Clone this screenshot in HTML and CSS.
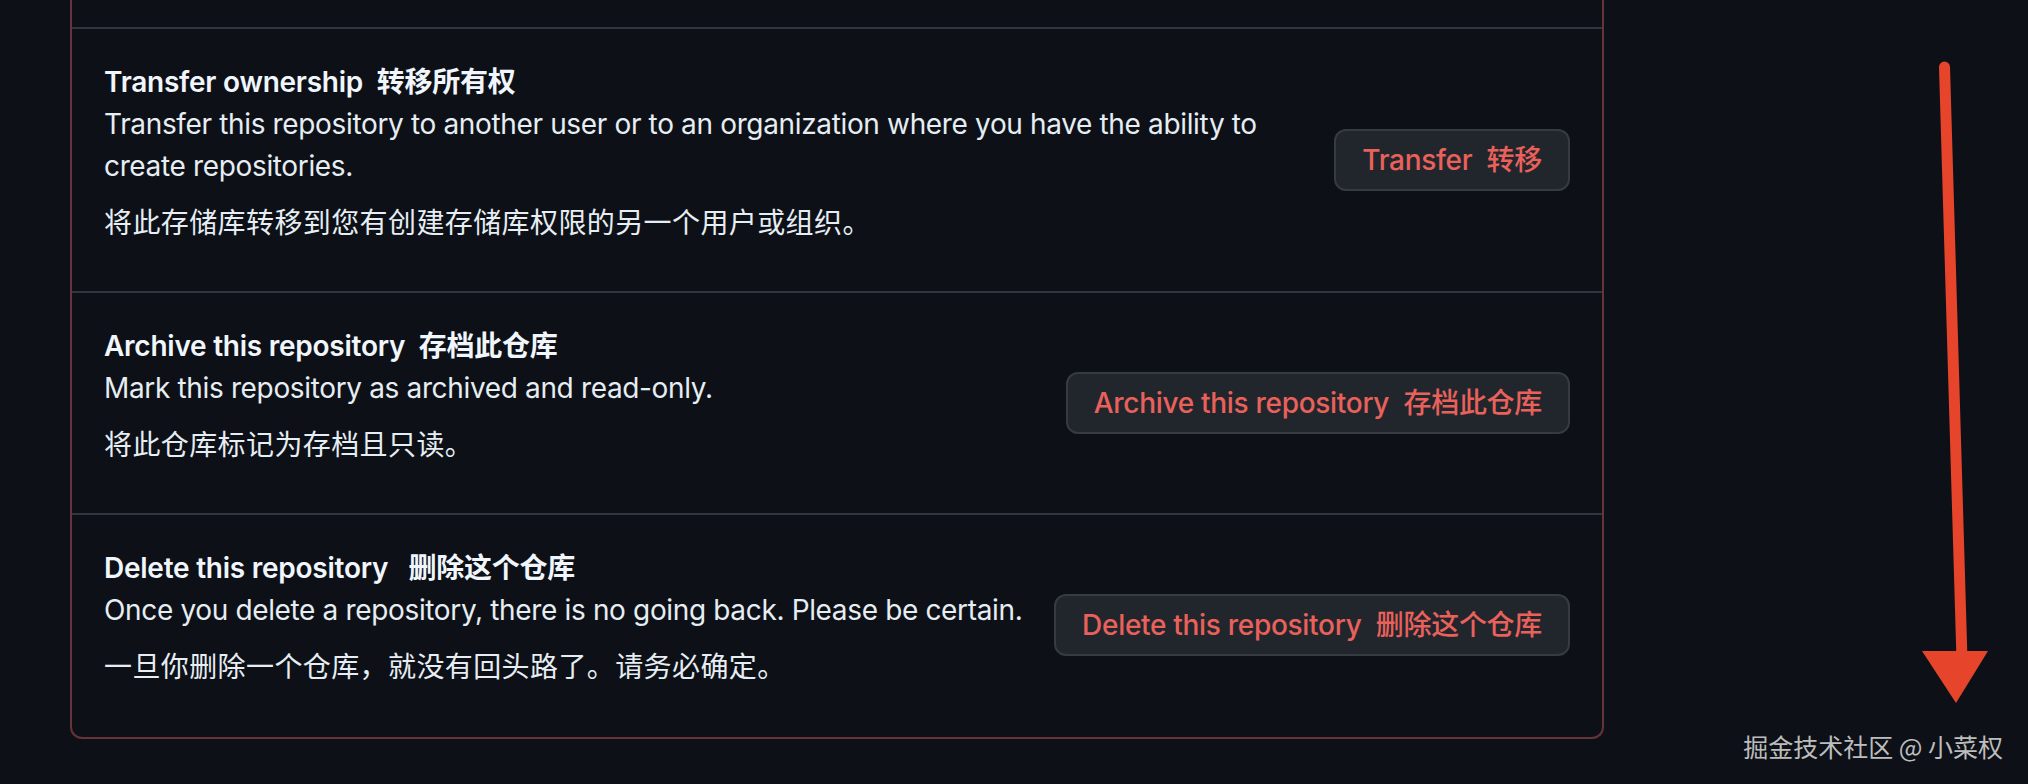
FILE: index.html
```html
<!DOCTYPE html>
<html lang="zh-CN">
<head>
<meta charset="utf-8">
<title>Danger Zone</title>
<link rel="stylesheet" href="styles.css">
</head>
<body>
<div class="page">
  <div class="danger-box">
    <div class="row-cut"></div>

    <div class="row">
      <div class="text">
        <div class="title">Transfer ownership&nbsp; 转移所有权</div>
        <p class="desc">Transfer this repository to another user or to an organization where you have the ability to create repositories.</p>
        <p class="desc zh">将此存储库转移到您有创建存储库权限的另一个用户或组织。</p>
      </div>
      <button class="btn-danger">Transfer&nbsp; 转移</button>
    </div>

    <div class="row">
      <div class="text">
        <div class="title">Archive this repository&nbsp; 存档此仓库</div>
        <p class="desc">Mark this repository as archived and read-only.</p>
        <p class="desc zh">将此仓库标记为存档且只读。</p>
      </div>
      <button class="btn-danger">Archive this repository&nbsp; 存档此仓库</button>
    </div>

    <div class="row row-last">
      <div class="text">
        <div class="title">Delete this repository&nbsp;&nbsp; 删除这个仓库</div>
        <p class="desc">Once you delete a repository, there is no going back. Please be certain.</p>
        <p class="desc zh">一旦你删除一个仓库，就没有回头路了。请务必确定。</p>
      </div>
      <button class="btn-danger">Delete this repository&nbsp; 删除这个仓库</button>
    </div>
  </div>

  <svg class="arrow" width="110" height="680" viewBox="0 0 110 680" aria-hidden="true">
    <line x1="44.5" y1="27" x2="62" y2="620" stroke="#e6452c" stroke-width="11" stroke-linecap="round"/>
    <polygon points="22,611 88,611 56,663" fill="#e6452c"/>
  </svg>

  <div class="watermark">掘金技术社区 @ 小菜权</div>
</div>
</body>
</html>
```

FILE: styles.css
```css
html, body {
  margin: 0;
  padding: 0;
  background: #0d1117;
}

body {
  font-family: Inter, "Noto Sans CJK SC", sans-serif;
  color: #e6edf3;
}

.page {
  position: relative;
  height: 784px;
  overflow: hidden;
  padding-left: 70px;
}

.danger-box {
  width: 1534px;
  box-sizing: border-box;
  border: 2px solid #643438;
  border-top: none;
  border-radius: 0 0 12px 12px;
}

.row-cut {
  height: 27px;
  border-bottom: 2px solid #30363d;
}

.row {
  display: flex;
  align-items: center;
  gap: 16px;
  padding: 32px;
  border-bottom: 2px solid #30363d;
}

.row-last {
  border-bottom: none;
  padding-bottom: 34px;
}

.text {
  flex: 1;
  min-width: 0;
}

.title {
  font-size: 28px;
  line-height: 42px;
  font-weight: 600;
  letter-spacing: -0.25px;
  color: #f0f6fc;
}

.desc {
  margin: 0 0 15px;
  font-size: 28px;
  line-height: 42px;
  letter-spacing: -0.35px;
  color: #e6edf3;
}

.desc.zh {
  letter-spacing: 0.4px;
}

.btn-danger {
  flex-shrink: 0;
  white-space: nowrap;
  font-family: Inter, "Noto Sans CJK SC", sans-serif;
  font-size: 28px;
  line-height: 40px;
  font-weight: 500;
  letter-spacing: -0.3px;
  color: #e9615a;
  background: #21262d;
  border: 2px solid #363b42;
  border-radius: 12px;
  padding: 9px 26px;
}

.arrow {
  position: absolute;
  left: 1900px;
  top: 40px;
}

.watermark {
  position: absolute;
  right: 25px;
  top: 731px;
  font-family: "Noto Sans CJK SC", sans-serif;
  font-size: 25px;
  line-height: 30px;
  color: #bdbdbd;
}
```
